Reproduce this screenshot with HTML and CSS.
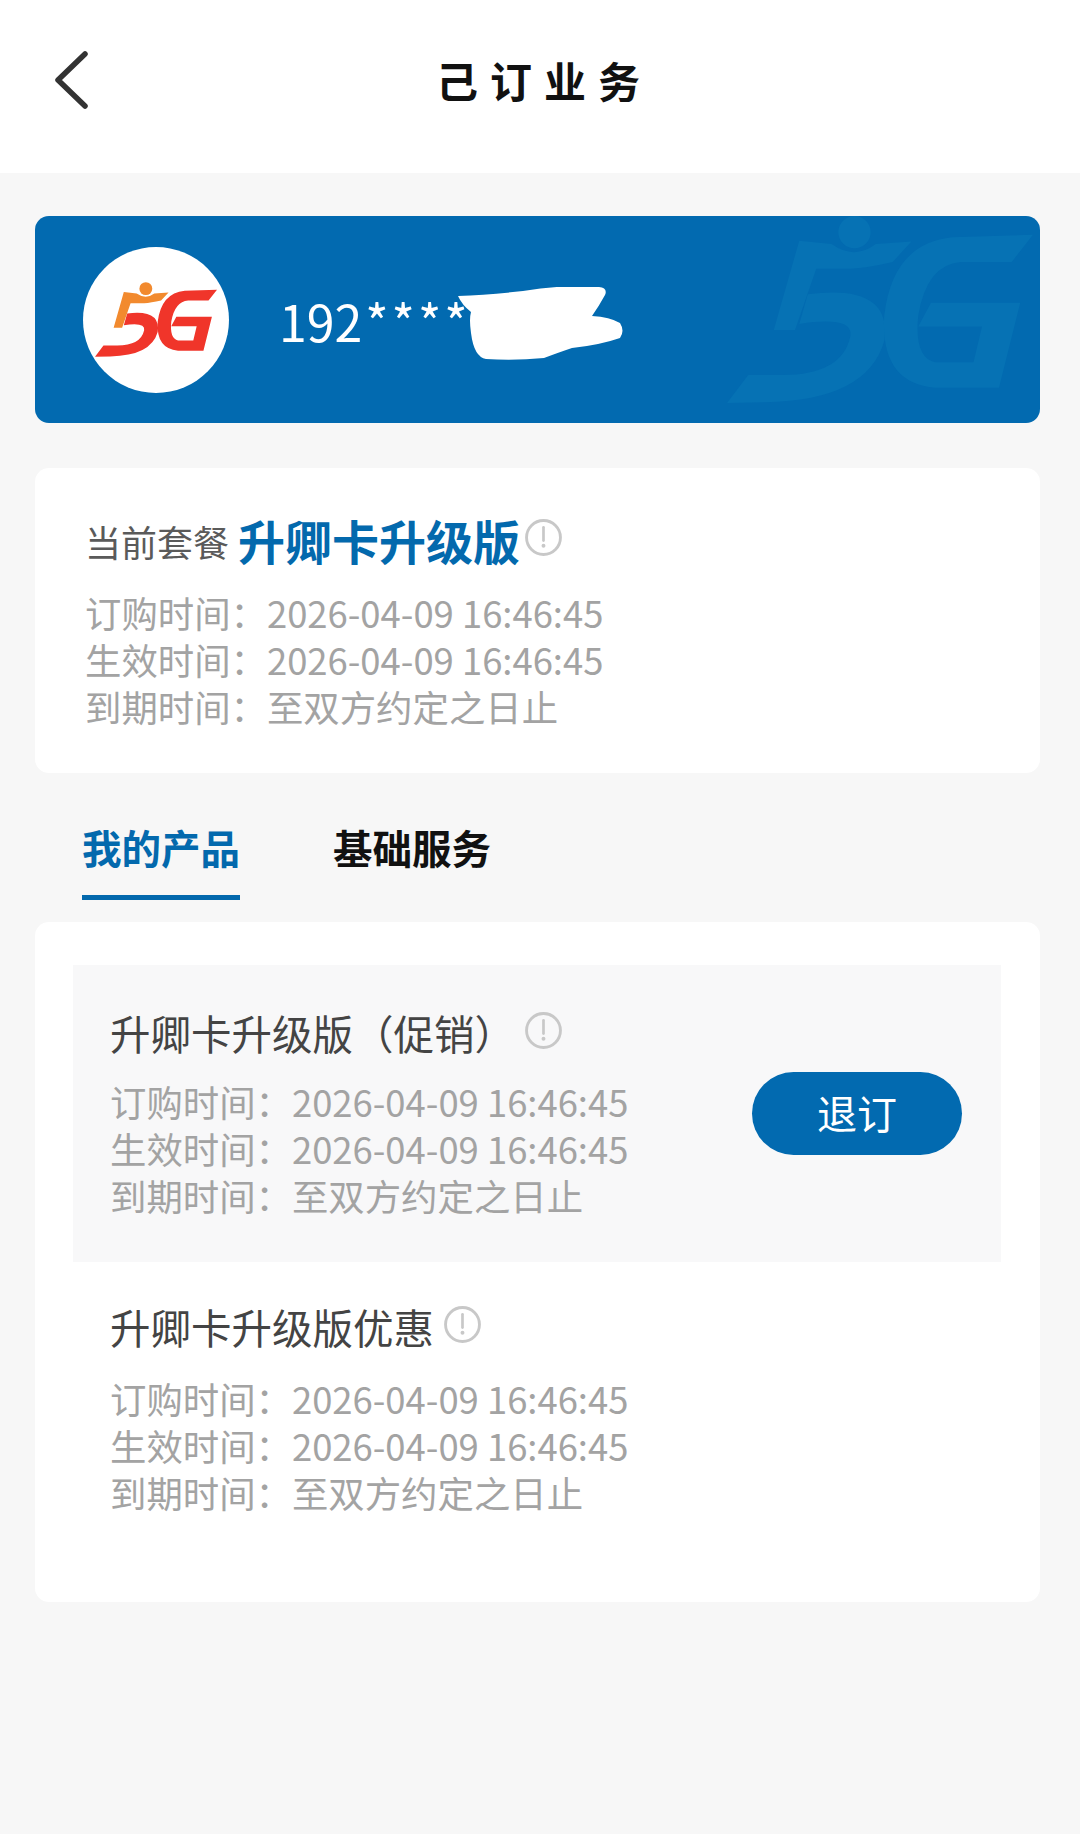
FILE: index.html
```html
<!DOCTYPE html>
<html lang="zh-CN">
<head>
    <meta charset="UTF-8">
    <title>已订业务</title>
    <link rel="stylesheet" href="styles.css">
</head>
<body>
    <svg class="defs" width="0" height="0">
        <symbol id="info" viewBox="0 0 36 36">
            <circle cx="18" cy="18" r="16.5" fill="none" stroke="#c8c8c8" stroke-width="2.8"/>
            <path d="M18 8v13" fill="none" stroke="#c8c8c8" stroke-width="2.6" stroke-linecap="round"/>
            <circle cx="18" cy="26" r="1.9" fill="#c8c8c8"/>
        </symbol>
    </svg>

    <div class="header">
        <svg class="back" viewBox="0 0 36 58"><path d="M32 3L5 29l27 26" fill="none" stroke="#333" stroke-width="5.5" stroke-linecap="round" stroke-linejoin="round"/></svg>
        <div class="header-title">己订业务</div>
    </div>

    <div class="content">
        <div class="banner">
            <!-- 背景水印 -->
            <svg class="watermark" viewBox="105 153 440 240">
                <g fill="#0672b4">
                    <circle cx="255" cy="172" r="19"/>
                    <path d="M190 182l38 4q27 19 52 0l42-3-22 24q-30 7-50 8h-40l-25 72h-25z"/>
                    <path d="M200 245Q300 232 290 300 270 370 150 372L105 373l25-33h40q70 0 80-45 5-25-60-15z"/>
                    <path d="M465 175l-95 3q-70 7-80 92-5 80 60 85h75l25-100H345l-15 28h75l-10 42h-45q-25-5-20-55 10-60 50-63h60z"/>
                </g>
            </svg>
            <div class="avatar">
                <svg class="logo" viewBox="105 153 360 220">
                    <circle cx="255" cy="172" r="19" fill="#f28a2e"/>
                    <path fill="#f28a2e" d="M190 182l38 4q27 19 52 0l42-3-22 24q-30 7-50 8h-40l-25 72h-25z"/>
                    <path fill="#f0352a" d="M200 245Q300 232 290 300 270 370 150 372L105 373l25-33h40q70 0 80-45 5-25-60-15z"/>
                    <path fill="#f0352a" d="M465 175l-95 3q-70 7-80 92-5 80 60 85h75l25-100H345l-15 28h75l-10 42h-45q-25-5-20-55 10-60 50-63h60z"/>
                </svg>
            </div>
            <div class="phone">192<span class="stars">****</span></div>
            <!-- 涂抹遮挡 -->
            <svg class="smear" viewBox="0 0 165 73"><path fill="#fff" d="M0 9Q30 8 65 4 110-3 141 0q9 1 6 8-6 11-13 21 18 1 28 7 5 8 0 15-20 7-48 10-12 4-28 10-30 3-58 1-12-2-15-26-2-14 0-21Q4 18 0 9z"/></svg>
        </div>

        <div class="card plan">
            <div class="plan-title">
                <span class="plan-label">当前套餐</span>
                <span class="plan-name">升卿卡升级版</span>
                <svg class="info"><use href="#info"/></svg>
            </div>
            <div class="times">
                <div>订购时间：2026-04-09 16:46:45</div>
                <div>生效时间：2026-04-09 16:46:45</div>
                <div>到期时间：至双方约定之日止</div>
            </div>
        </div>

        <div class="tabs">
            <div class="tab current">我的产品</div>
            <div class="tab">基础服务</div>
        </div>

        <div class="card products">
            <div class="item item-gray">
                <div>
                    <div class="item-title">
                        <span>升卿卡升级版（促销）</span>
                        <svg class="info"><use href="#info"/></svg>
                    </div>
                    <div class="times">
                        <div>订购时间：2026-04-09 16:46:45</div>
                        <div>生效时间：2026-04-09 16:46:45</div>
                        <div>到期时间：至双方约定之日止</div>
                    </div>
                </div>
                <div class="btn">退订</div>
            </div>
            <div class="item item-plain">
                <div>
                    <div class="item-title">
                        <span>升卿卡升级版优惠</span>
                        <svg class="info"><use href="#info"/></svg>
                    </div>
                    <div class="times">
                        <div>订购时间：2026-04-09 16:46:45</div>
                        <div>生效时间：2026-04-09 16:46:45</div>
                        <div>到期时间：至双方约定之日止</div>
                    </div>
                </div>
            </div>
        </div>
    </div>
</body>
</html>
```

FILE: styles.css
```css
* {
    margin: 0;
    padding: 0;
    box-sizing: border-box;
}
html, body {
    height: 100%;
}
body {
    background-color: #f7f7f7;
    font-family: "Noto Sans CJK SC", "Noto Sans", sans-serif;
    overflow: hidden;
}
.defs {
    display: block;
    height: 0;
}
.header {
    position: relative;
    height: 173px;
    background-color: #fff;
    display: flex;
    align-items: center;
    justify-content: center;
}
.back {
    position: absolute;
    left: 53px;
    top: 51px;
    width: 36px;
    height: 58px;
}
.header-title {
    font-size: 42px;
    font-weight: 700;
    letter-spacing: 12px;
    margin-left: 8px;
    color: #111;
    position: relative;
    top: -7px;
}
.content {
    padding: 43px 40px 0 35px;
}
.banner {
    position: relative;
    height: 207px;
    background-color: #026ab0;
    border-radius: 14px;
    overflow: hidden;
    display: flex;
    align-items: center;
    padding-left: 48px;
}
.watermark {
    position: absolute;
    left: 692px;
    top: 0;
    width: 374px;
    height: 204px;
}
.avatar {
    width: 146px;
    height: 146px;
    border-radius: 50%;
    background-color: #fff;
    display: flex;
    align-items: center;
    justify-content: center;
    position: relative;
}
.logo {
    width: 122px;
    height: 75px;
}
.phone {
    margin-left: 50px;
    font-size: 50px;
    color: #fff;
    position: relative;
}
.stars {
    letter-spacing: 3px;
    margin-left: 3px;
}
.smear {
    position: absolute;
    left: 423px;
    top: 71px;
    width: 165px;
    height: 73px;
}
.card {
    background-color: #fff;
    border-radius: 14px;
}
.plan {
    height: 305px;
    margin-top: 45px;
    padding: 38px 0 0 50px;
}
.plan-title {
    display: flex;
    align-items: center;
    height: 66px;
}
.plan-label {
    font-size: 36px;
    color: #5a5a5a;
    margin-right: 9px;
    position: relative;
    top: 2px;
}
.plan-name {
    font-size: 47px;
    font-weight: 700;
    color: #0369ad;
}
.info {
    width: 37px;
    height: 37px;
    margin-left: 5px;
    margin-bottom: 4px;
    flex-shrink: 0;
}
.times {
    font-size: 36.4px;
    line-height: 47px;
    color: #a3a3a3;
}
.plan .times {
    margin-top: 17px;
}
.tabs {
    display: flex;
    height: 127px;
    padding-left: 47px;
    gap: 93px;
}
.tab {
    font-size: 39.5px;
    font-weight: 700;
    color: #111;
    height: 127px;
    padding-top: 38px;
    line-height: 72px;
}
.tab.current {
    color: #0369ad;
    position: relative;
}
.tab.current::after {
    content: "";
    position: absolute;
    left: 0;
    right: 0;
    bottom: 0;
    height: 5px;
    background-color: #0369ad;
}
.products {
    height: 680px;
    margin-top: 22px;
    padding: 43px 39px 0 38px;
}
.item {
    height: 297px;
    padding: 40px 39px 0 37px;
    display: flex;
    justify-content: space-between;
}
.item-gray {
    background-color: #f8f8f9;
}
.item-plain {
    padding-top: 37px;
}
.item-title {
    display: flex;
    align-items: center;
    height: 54px;
    font-size: 40.5px;
    color: #444;
}
.item-title .info {
    margin-left: 10px;
}
.item .times {
    margin-top: 19px;
}
.item-plain .times {
    margin-top: 22px;
}
.btn {
    width: 210px;
    height: 83px;
    margin-top: 67px;
    border-radius: 42px;
    background-color: #026ab0;
    color: #fff;
    font-size: 40px;
    line-height: 81px;
    text-align: center;
}
```
